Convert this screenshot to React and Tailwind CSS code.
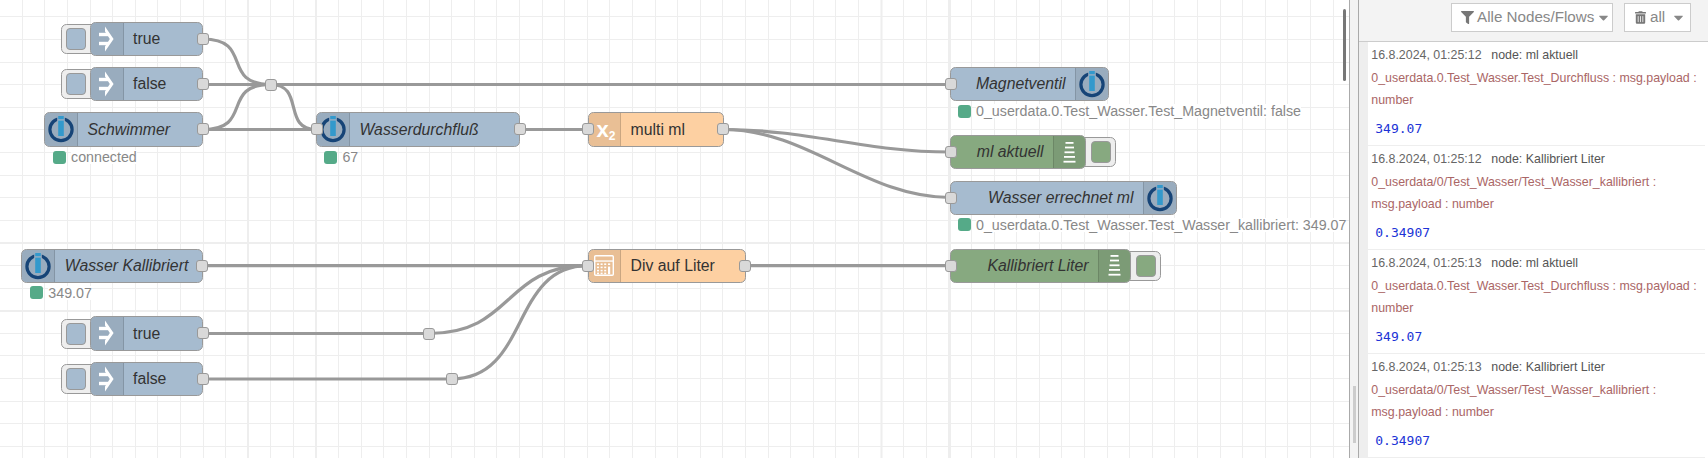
import React from "react";
import { FaFilter, FaTrashAlt, FaCaretDown } from "react-icons/fa";

const SANS = "font-['Liberation_Sans',Arial,sans-serif]";
const vLines = Array.from({ length: 60 }, (_, i) => Math.floor(i * 22.6 - 0.3) + 0.5);
const hLines = Array.from({ length: 21 }, (_, i) => Math.floor(i * 22.6 - 5.7) + 0.5);
const vThick = [248, 316, 881.5, 950];
const hThick = [243, 311];

const wires = [
  "M203 39 C254 39 220 84.5 270.7 84.5",
  "M203 84.5 L270.7 84.5",
  "M203 129.5 C254 129.5 220 84.5 270.7 84.5",
  "M203 129.5 L316 129.5",
  "M270.7 84.5 C305 84.5 282 129.5 316 129.5",
  "M270.7 84.5 L950 84.5",
  "M519.6 129.5 L587.6 129.5",
  "M723.6 129.5 C808 129.5 865 152 950 152",
  "M723.6 129.5 C808 129.5 865 197.5 950 197.5",
  "M203 265.7 L587.6 265.7",
  "M746 265.7 L950 265.7",
  "M203 333.5 L429 333.5",
  "M429 333.5 C514 333.5 503 265.7 587.6 265.7",
  "M203 379 L451.8 379",
  "M451.8 379 C530 379 510 265.7 587.6 265.7",
];

function IoIcon() {
  return (
    <svg viewBox="0 0 28 28" className="w-[28px] h-[28px]">
      <circle cx="14" cy="14.6" r="11.1" fill="none" stroke="#164477" strokeWidth="3.2" />
      <rect x="10.2" y="0" width="7.6" height="6.2" fill="#98adc2" />
      <rect x="11.2" y="1" width="5.6" height="3.2" fill="#3399cc" />
      <rect x="11.2" y="5.6" width="5.6" height="15.4" fill="#3399cc" />
    </svg>
  );
}

function InjectIcon() {
  return (
    <svg viewBox="0 0 15 26" className="w-[15px] h-[26px]">
      <rect x="0" y="6.8" width="9" height="3.4" fill="#fff" />
      <rect x="0" y="15.8" width="9" height="3.4" fill="#fff" />
      <path d="M6 0.5 L14.6 13 L6 25.5 L6 20.5 L10.8 13 L6 5.5 Z" fill="#fff" />
    </svg>
  );
}

function DebugIcon() {
  return (
    <svg viewBox="0 0 13 21" className="w-[13px] h-[21px]">
      <rect x="2.5" y="0" width="8" height="1.8" fill="#fff" />
      <rect x="2" y="4.6" width="9" height="1.8" fill="#fff" />
      <rect x="1.5" y="9.4" width="10" height="1.8" fill="#fff" />
      <rect x="1" y="14" width="11" height="1.8" fill="#fff" />
      <rect x="0.5" y="18.8" width="12" height="1.8" fill="#fff" />
    </svg>
  );
}

function CalcIcon() {
  return (
    <svg viewBox="0 0 20 21" className="w-[20px] h-[21px]">
      <rect x="0.7" y="0.7" width="18.6" height="19.6" rx="1" fill="none" stroke="#fff" strokeWidth="1.4" />
      <rect x="0.7" y="5.4" width="18.6" height="1.3" fill="#fff" />
      {[8.4, 11.6, 14.8, 17.6].map((y) =>
        [3, 6.6, 10.2].map((x) => (
          <rect key={`${x}-${y}`} x={x} y={y} width="2" height="1.6" fill="#fff" />
        ))
      )}
      <rect x="14" y="8.4" width="2.2" height="1.6" fill="#fff" />
      <rect x="14" y="11.6" width="2.2" height="7.6" fill="#fff" />
    </svg>
  );
}

function Port({ className }) {
  return (
    <div className={`absolute top-1/2 -translate-y-1/2 w-[12px] h-[12px] rounded-[3px] bg-[#d9d9d9] border border-[#999] ${className}`} />
  );
}

function Section({ children, right, className = "" }) {
  return (
    <div
      className={`h-full shrink-0 flex items-center justify-center bg-black/[0.08] border-[#00000022] ${
        right ? "border-l order-2" : "border-r"
      } ${className}`}
    >
      {children}
    </div>
  );
}

function Node({ pos, color, label, italic, icon, iconW, right, inPort, outPort, labelPad }) {
  return (
    <div
      className={`absolute h-[34.4px] flex rounded-[5.5px] border border-[#999] ${color} ${pos} ${
        right ? "justify-between" : ""
      }`}
    >
      <Section right={right} className={`${iconW} ${right ? "rounded-r-[5px]" : "rounded-l-[5px]"}`}>
        {icon}
      </Section>
      <div
        className={`flex-1 flex items-center min-w-0 whitespace-nowrap text-[15.8px] leading-none text-[#333] ${SANS} ${
          italic ? "italic" : ""
        } ${right ? "justify-end" : ""} ${labelPad}`}
      >
        {label}
      </div>
      {inPort && <Port className="-left-[6.5px]" />}
      {outPort && <Port className="-right-[6.5px]" />}
    </div>
  );
}

function Status({ pos, text }) {
  return (
    <div className={`absolute flex items-center h-[14px] ${pos}`}>
      <div className="w-[13px] h-[13px] rounded-[3px] bg-[#55aa88] shrink-0" />
      <span className={`ml-[5px] bg-white whitespace-nowrap text-[14.25px] leading-[14px] text-[#888] ${SANS}`}>{text}</span>
    </div>
  );
}

function Button({ pos, color, side }) {
  return (
    <div
      className={`absolute h-[30px] w-[33px] bg-[#eeeeee] border border-[#999] flex items-center ${pos} ${
        side === "left" ? "rounded-l-[5.5px] pl-[4px]" : "rounded-r-[5.5px] justify-end pr-[4px]"
      }`}
    >
      <div className={`w-[20px] h-[22px] rounded-[4px] border border-[#999] ${color}`} />
    </div>
  );
}

function Junction({ pos }) {
  return <div className={`absolute w-[12px] h-[12px] rounded-[3px] bg-[#d9d9d9] border border-[#999] ${pos}`} />;
}

const BLUE = "bg-[#a6bbcf]";
const ORANGE = "bg-[#fdd0a2]";
const GREEN = "bg-[#87a980]";
const ICON_L = "w-[32.5px]";

function Message({ date, node, path1, path2, value }) {
  return (
    <div className={`h-[104px] shrink-0 pl-[3.3px] pt-[2px] border-b border-[#eeeeee] bg-white ${SANS}`}>
      <div className="flex text-[12.4px] leading-[22.6px] text-[#666] whitespace-nowrap">
        <span className="w-[120px]">{date}</span>
        <span className="text-[#555]">node: {node}</span>
      </div>
      <div className="text-[12.4px] leading-[22.6px] text-[#aa6666] whitespace-nowrap">{path1}</div>
      <div className="text-[12.4px] leading-[22.6px] text-[#aa6666] whitespace-nowrap">{path2}</div>
      <div className="mt-[6.6px] pl-[4px] text-[13px] leading-[22px] text-[#2033d6] font-['DejaVu_Sans_Mono',monospace]">{value}</div>
    </div>
  );
}

export default function App() {
  return (
    <div className="w-[1708px] h-[458px] flex overflow-hidden bg-white">
      <div className="relative w-[1349px] h-full shrink-0 overflow-hidden bg-white">
        <svg className="absolute left-0 top-0 w-[1349px] h-[458px]" viewBox="0 0 1349 458">
          {vLines.map((x) => (
            <line key={`v${x}`} x1={x} y1="0" x2={x} y2="458" stroke="#eeeeee" strokeWidth="1" />
          ))}
          {hLines.map((y) => (
            <line key={`h${y}`} x1="0" y1={y} x2="1349" y2={y} stroke="#eeeeee" strokeWidth="1" />
          ))}
          {vThick.map((x) => (
            <line key={`vt${x}`} x1={x} y1="0" x2={x} y2="458" stroke="#eeeeee" strokeWidth="2" />
          ))}
          {hThick.map((y) => (
            <line key={`ht${y}`} x1="0" y1={y} x2="1349" y2={y} stroke="#eeeeee" strokeWidth="2" />
          ))}
          {wires.map((d) => (
            <path key={d} d={d} fill="none" stroke="#999999" strokeWidth="3.2" />
          ))}
        </svg>

        <Button pos="left-[61px] top-[24.4px]" color={BLUE} side="left" />
        <Node pos="left-[90px] top-[22px] w-[113px]" color={BLUE} label="true" icon={<InjectIcon />} iconW={ICON_L} outPort labelPad="pl-[9.5px]" />
        <Button pos="left-[61px] top-[69.4px]" color={BLUE} side="left" />
        <Node pos="left-[90px] top-[67px] w-[113px]" color={BLUE} label="false" icon={<InjectIcon />} iconW={ICON_L} outPort labelPad="pl-[9.5px]" />

        <Node pos="left-[44px] top-[112.3px] w-[159px]" color={BLUE} label="Schwimmer" italic icon={<IoIcon />} iconW={ICON_L} outPort labelPad="pl-[10px]" />
        <Status pos="left-[53px] top-[150px]" text="connected" />

        <Node pos="left-[316px] top-[112.3px] w-[204px]" color={BLUE} label="Wasserdurchfluß" italic icon={<IoIcon />} iconW={ICON_L} inPort outPort labelPad="pl-[10px]" />
        <Status pos="left-[324.4px] top-[150px]" text="67" />

        <Node
          pos="left-[587.6px] top-[112.3px] w-[136px]"
          color={ORANGE}
          label="multi ml"
          icon={
            <span className={`text-white font-bold text-[22px] leading-none translate-x-[1.5px] translate-y-[1px] whitespace-nowrap ${SANS}`}>
              x<sub className="text-[12px] leading-none">2</sub>
            </span>
          }
          iconW={ICON_L}
          inPort
          outPort
          labelPad="pl-[9.5px]"
        />

        <Node pos="left-[950px] top-[67px] w-[158.5px]" color={BLUE} label="Magnetventil" italic right icon={<IoIcon />} iconW="w-[33px]" inPort labelPad="pr-[9px]" />
        <Status pos="left-[958px] top-[104px]" text="0_userdata.0.Test_Wasser.Test_Magnetventil: false" />

        <Button pos="left-[1083px] top-[137px]" color={GREEN} side="right" />
        <Node pos="left-[950px] top-[135px] w-[135.5px]" color={GREEN} label="ml aktuell" italic right icon={<DebugIcon />} iconW="w-[32px]" inPort labelPad="pr-[9px]" />

        <Node pos="left-[950px] top-[180.5px] w-[226.5px]" color={BLUE} label="Wasser errechnet ml" italic right icon={<IoIcon />} iconW="w-[33px]" inPort labelPad="pr-[9px]" />
        <Status pos="left-[958px] top-[217.5px]" text="0_userdata.0.Test_Wasser.Test_Wasser_kallibriert: 349.07" />

        <Node pos="left-[21.3px] top-[248.5px] w-[181.7px]" color={BLUE} label="Wasser Kallibriert" italic icon={<IoIcon />} iconW={ICON_L} outPort labelPad="pl-[10px]" />
        <Status pos="left-[30.3px] top-[285.5px]" text="349.07" />

        <Node pos="left-[587.6px] top-[248.5px] w-[158.4px]" color={ORANGE} label="Div auf Liter" icon={<CalcIcon />} iconW={ICON_L} inPort outPort labelPad="pl-[9.5px]" />

        <Button pos="left-[1128px] top-[250.7px]" color={GREEN} side="right" />
        <Node pos="left-[950px] top-[248.5px] w-[181px]" color={GREEN} label="Kallibriert Liter" italic right icon={<DebugIcon />} iconW="w-[32.5px]" inPort labelPad="pr-[9px]" />

        <Button pos="left-[61px] top-[318.7px]" color={BLUE} side="left" />
        <Node pos="left-[90px] top-[316.3px] w-[113px]" color={BLUE} label="true" icon={<InjectIcon />} iconW={ICON_L} outPort labelPad="pl-[9.5px]" />
        <Button pos="left-[61px] top-[364.2px]" color={BLUE} side="left" />
        <Node pos="left-[90px] top-[361.8px] w-[113px]" color={BLUE} label="false" icon={<InjectIcon />} iconW={ICON_L} outPort labelPad="pl-[9.5px]" />

        <Junction pos="left-[264.7px] top-[78.5px]" />
        <Junction pos="left-[423px] top-[327.5px]" />
        <Junction pos="left-[445.8px] top-[373px]" />

        <div className="absolute left-[1343px] top-[9px] w-[3px] h-[72px] rounded-[2px] bg-[#777]" />
      </div>

      <div className="relative w-[10px] h-full shrink-0 bg-[#f3f3f3] border-x border-[#aaaaaa]">
        <div className="absolute left-[3px] top-[386px] w-[3px] h-[57px] bg-[#cccccc]" />
      </div>

      <div className="flex-1 h-full flex flex-col min-w-0 bg-white">
        <div className={`h-[42px] shrink-0 flex items-start justify-end gap-[11.5px] pt-[3.3px] pr-[17.5px] bg-[#f3f3f3] border-b border-[#cccccc] ${SANS}`}>
          <div className="w-[161.5px] h-[28.5px] flex items-center bg-white border border-[#cccccc] pl-[9px] text-[15.2px] text-[#888]">
            <FaFilter className="w-[13px] h-[13px] text-[#777] shrink-0" />
            <span className="ml-[3px] whitespace-nowrap">Alle Nodes/Flows</span>
            <FaCaretDown className="ml-[2px] w-[15px] h-[15px] text-[#888] shrink-0" />
          </div>
          <div className="w-[66.5px] h-[28.5px] flex items-center bg-white border border-[#cccccc] pl-[10px] text-[15.2px] text-[#888]">
            <FaTrashAlt className="w-[11px] h-[13px] text-[#777] shrink-0" />
            <span className="ml-[4px]">all</span>
            <FaCaretDown className="ml-[6px] w-[15px] h-[15px] text-[#888] shrink-0" />
          </div>
        </div>
        <div className="flex-1 flex min-h-0 overflow-hidden">
          <div className="w-[9px] shrink-0 bg-[#eeeeee]" />
          <div className="w-[337px] shrink-0 flex flex-col">
            <Message date="16.8.2024, 01:25:12" node="ml aktuell" path1="0_userdata.0.Test_Wasser.Test_Durchfluss : msg.payload :" path2="number" value="349.07" />
            <Message date="16.8.2024, 01:25:12" node="Kallibriert Liter" path1="0_userdata/0/Test_Wasser/Test_Wasser_kallibriert :" path2="msg.payload : number" value="0.34907" />
            <Message date="16.8.2024, 01:25:13" node="ml aktuell" path1="0_userdata.0.Test_Wasser.Test_Durchfluss : msg.payload :" path2="number" value="349.07" />
            <Message date="16.8.2024, 01:25:13" node="Kallibriert Liter" path1="0_userdata/0/Test_Wasser/Test_Wasser_kallibriert :" path2="msg.payload : number" value="0.34907" />
          </div>
        </div>
      </div>
    </div>
  );
}
